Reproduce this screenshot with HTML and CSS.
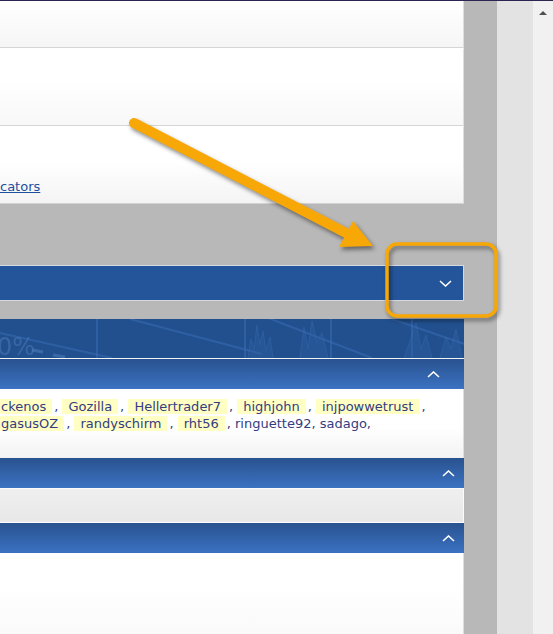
FILE: index.html
```html
<!DOCTYPE html>
<html lang="en">
<head>
    <meta charset="UTF-8">
    <meta name="viewport" content="width=device-width, initial-scale=1.0">
    <title>Forum</title>
    <link rel="stylesheet" href="styles.css">
</head>
<body>

    <div class="topline"></div>

    <div class="window">
        <div class="page">
            <div class="column">
                <div class="panel panel-top"></div>
                <div class="panel panel-plain"></div>
                <div class="panel panel-links">
                    <a href="#">cators</a>
                </div>

                <div class="spacer"></div>

                <!-- collapsed block -->
                <div class="bar-collapsed">
                    <svg class="chevron" width="13" height="7" viewBox="0 0 13 7"><polyline points="1,1 6.5,6 12,1"/></svg>
                </div>

                <!-- chart banner -->
                <div class="banner">
                    <svg width="464" height="39" viewBox="0 0 464 39">
                        <g class="banner-lines">
                            <line x1="0" y1="14" x2="112" y2="39"/>
                            <line x1="130" y1="0" x2="262" y2="35"/>
                            <line x1="268" y1="-1" x2="372" y2="39"/>
                            <line x1="392" y1="0" x2="470" y2="27"/>
                            <line x1="97" y1="0" x2="97" y2="39"/>
                            <line x1="245" y1="0" x2="245" y2="39"/>
                            <line x1="331" y1="0" x2="331" y2="39"/>
                            <line x1="412" y1="0" x2="412" y2="39"/>
                        </g>
                        <g class="banner-dash">
                            <line x1="32" y1="31" x2="43" y2="33"/>
                            <line x1="53" y1="36" x2="65" y2="38"/>
                        </g>
                        <g class="banner-spikes">
                            <polyline points="248,39 251,20 254,30 257,6 260,26 263,12 266,32 270,18 273,39"/>
                            <polyline points="300,39 304,8 308,30 312,2 317,24 322,14 328,39"/>
                            <polyline points="404,39 410,22 416,4 421,30 426,16 432,39"/>
                            <polyline points="440,39 446,18 451,30 456,10 462,39"/>
                        </g>
                        <text x="-3" y="36" class="banner-text">0%</text>
                    </svg>
                </div>

                <div class="bar-head head-inset">
                    <svg class="chevron" width="13" height="7" viewBox="0 0 13 7"><polyline points="1,6 6.5,1 12,6"/></svg>
                </div>
                <div class="names">
                    <div class="names-line">
                        <span class="hl">ckenos</span>, <span class="hl">Gozilla</span>, <span class="hl">Hellertrader7</span>, <span class="hl">highjohn</span>, <span class="hl">injpowwetrust</span>,
                    </div>
                    <div class="names-line">
                        <span class="hl">gasusOZ</span>, <span class="hl">randyschirm</span>, <span class="hl">rht56</span>, ringuette92, sadago,
                    </div>
                </div>

                <div class="bar-head">
                    <svg class="chevron" width="13" height="7" viewBox="0 0 13 7"><polyline points="1,6 6.5,1 12,6"/></svg>
                </div>
                <div class="panel panel-gray"></div>

                <div class="bar-head">
                    <svg class="chevron" width="13" height="7" viewBox="0 0 13 7"><polyline points="1,6 6.5,1 12,6"/></svg>
                </div>
                <div class="panel panel-last"></div>
            </div>
        </div>
        <div class="side"></div>
        <div class="scrollbar">
            <span class="scroll-up"></span>
        </div>
    </div>

    <!-- callout drawn over the page -->
    <svg class="callout" width="553" height="634" viewBox="0 0 553 634">
        <line class="callout-shaft" x1="134" y1="123" x2="348" y2="234"/>
        <polygon class="callout-fill" points="353,221 373,246 339,247"/>
        <rect class="callout-box" x="387" y="244" width="109" height="72" rx="10"/>
    </svg>

</body>
</html>
```

FILE: styles.css
```css
body {
    margin: 0;
    height: 634px;
    overflow: hidden;
    font-family: "DejaVu Sans", Verdana, sans-serif;
    font-size: 13px;
    position: relative;
}
.topline {
    height: 1px;
    background-color: #2b2550;
}
.window {
    display: flex;
    height: 633px;
}
.page {
    width: 497px;
    background-color: #b8b8b8;
}
.column {
    width: 464px;
}
.side {
    width: 36px;
    background-color: #e3e3e3;
}
.scrollbar {
    width: 20px;
    background-color: #f1f1f1;
    display: flex;
    justify-content: center;
    padding-top: 10px;
    box-sizing: border-box;
}
.scroll-up {
    width: 0;
    height: 0;
    border-left: 4px solid transparent;
    border-right: 4px solid transparent;
    border-bottom: 4px solid #505050;
}

/* light panels */
.panel {
    box-sizing: border-box;
    width: 464px;
    border-right: 1px solid #dedede;
}
.panel-top {
    height: 47px;
    background: linear-gradient(#ffffff, #f6f6f6);
    border-bottom: 1px solid #d6d6d6;
}
.panel-plain {
    height: 78px;
    background: linear-gradient(#ffffff 40%, #f8f8f8);
    border-top: 1px solid #ffffff;
    border-bottom: 1px solid #d6d6d6;
}
.panel-links {
    height: 78px;
    background: linear-gradient(#ffffff 45%, #f4f4f4);
    border-top: 1px solid #ffffff;
    border-bottom: 1px solid #d2d2d2;
    display: flex;
    align-items: flex-end;
    padding-bottom: 8px;
    line-height: 16px;
}
.panel-links a {
    color: #1f4f9f;
}
.spacer {
    height: 61px;
}

/* blue bars */
.bar-collapsed {
    box-sizing: border-box;
    height: 36px;
    margin-bottom: 18px;
    background-color: #24549a;
    border: 1px solid #d4d9e2;
    border-left: none;
    display: flex;
    align-items: center;
    justify-content: flex-end;
    padding-right: 11px;
}
.bar-head {
    box-sizing: border-box;
    height: 30px;
    background: linear-gradient(#29528f, #3b72c2);
    display: flex;
    align-items: center;
    justify-content: flex-end;
    padding-right: 9px;
}
.head-inset {
    padding-right: 24px;
}
.chevron polyline {
    fill: none;
    stroke: #ffffff;
    stroke-width: 1.6;
}

/* banner */
.banner {
    height: 39px;
    background-color: #22508f;
    border-bottom: 1px solid #f2f4f8;
}
.banner svg {
    display: block;
}
.banner-lines line {
    stroke: #3b6fb6;
    stroke-width: 2;
    opacity: 0.5;
}
.banner-dash line {
    stroke: #5b86c4;
    stroke-width: 3;
    opacity: 0.45;
}
.banner-spikes polyline {
    fill: #2f5fa3;
    stroke: #3f72b8;
    stroke-width: 1;
    opacity: 0.4;
}
.banner-text {
    font-family: "DejaVu Sans", sans-serif;
    font-size: 24px;
    fill: #5a86c6;
    opacity: 0.4;
}

/* who's online */
.names {
    box-sizing: border-box;
    height: 69px;
    width: 464px;
    padding-top: 9px;
    background: linear-gradient(#ffffff 55%, #f3f3f3);
    border-right: 1px solid #dedede;
    color: #343c80;
    line-height: 17px;
    overflow: hidden;
}
.names-line {
    white-space: nowrap;
    margin-left: -5px;
}
.hl {
    background-color: #ffffc4;
    padding: 0 6px;
    margin-right: 2px;
}
.panel-gray {
    height: 35px;
    background: linear-gradient(#efefef, #e8e8e8);
    border: 1px solid #fbfbfb;
    border-left: none;
}
.panel-last {
    height: 81px;
    background: linear-gradient(#ffffff 40%, #fafafa);
}

/* orange callout */
.callout {
    position: absolute;
    top: 0;
    left: 0;
    pointer-events: none;
    filter: drop-shadow(2px 3px 2px rgba(0, 0, 0, 0.45));
}
.callout-shaft {
    stroke: #f7a806;
    stroke-width: 10;
    stroke-linecap: round;
}
.callout-fill {
    fill: #f7a806;
}
.callout-box {
    fill: none;
    stroke: #f7a806;
    stroke-width: 3.5;
}
```
